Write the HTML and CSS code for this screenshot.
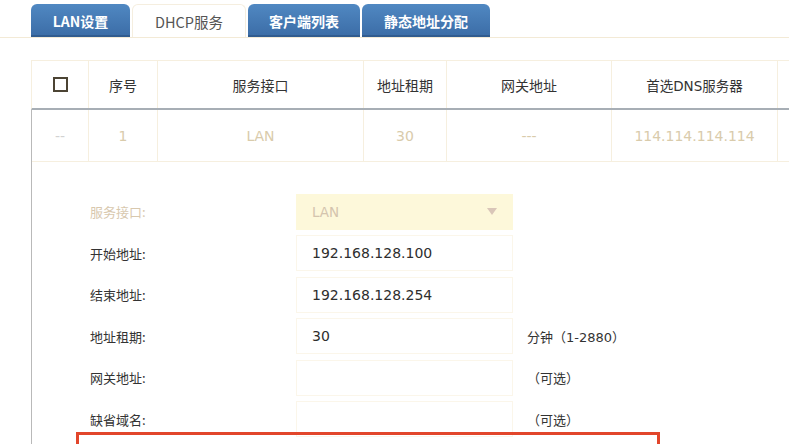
FILE: index.html
```html
<!DOCTYPE html>
<html lang="zh-CN">
<head>
<meta charset="utf-8">
<title>DHCP服务</title>
<link rel="stylesheet" href="styles.css">
</head>
<body>
<div class="page">
  <div class="tabs">
    <div class="tab blue t1">LAN设置</div>
    <div class="tab active t2">DHCP服务</div>
    <div class="tab blue t3">客户端列表</div>
    <div class="tab blue t4">静态地址分配</div>
  </div>

  <div class="table">
    <div class="row head">
      <div class="cell"><span class="checkbox"></span></div>
      <div class="cell">序号</div>
      <div class="cell">服务接口</div>
      <div class="cell">地址租期</div>
      <div class="cell">网关地址</div>
      <div class="cell">首选DNS服务器</div>
      <div class="cell"></div>
    </div>
    <div class="body">
      <div class="row data">
        <div class="cell">--</div>
        <div class="cell">1</div>
        <div class="cell">LAN</div>
        <div class="cell">30</div>
        <div class="cell">---</div>
        <div class="cell">114.114.114.114</div>
        <div class="cell"></div>
      </div>
      <div class="edit">
        <div class="form">
          <div class="label disabled">服务接口:</div>
          <div class="field select"><span>LAN</span><span class="arrow"></span></div>
          <div class="hint"></div>

          <div class="label">开始地址:</div>
          <div class="field">192.168.128.100</div>
          <div class="hint"></div>

          <div class="label">结束地址:</div>
          <div class="field">192.168.128.254</div>
          <div class="hint"></div>

          <div class="label">地址租期:</div>
          <div class="field">30</div>
          <div class="hint">分钟（1-2880）</div>

          <div class="label">网关地址:</div>
          <div class="field"></div>
          <div class="hint">（可选）</div>

          <div class="label">缺省域名:</div>
          <div class="field"></div>
          <div class="hint">（可选）</div>
        </div>
        <div class="highlight"></div>
      </div>
    </div>
  </div>
</div>
</body>
</html>
```

FILE: styles.css
```css
html, body {
  margin: 0;
  padding: 0;
  background: #ffffff;
  overflow: hidden;
}

.page {
  width: 789px;
  height: 444px;
  overflow: hidden;
  font-family: "DejaVu Sans", "Noto Sans CJK SC", sans-serif;
  color: #333333;
}

/* Tabs */
.tabs {
  display: flex;
  gap: 2px;
  padding: 4px 0 0 31px;
  border-bottom: 1px solid #f3ead6;
  height: 33px;
}

.tab {
  height: 33px;
  display: flex;
  align-items: center;
  justify-content: center;
  font-family: "Noto Sans CJK SC", sans-serif;
  font-size: 14px;
  border-radius: 6px 6px 0 0;
  box-sizing: border-box;
}

.tab.blue {
  background: linear-gradient(#5088c2, #3b6ca6);
  color: #ffffff;
  font-weight: 700;
  box-shadow: inset 0 -2px 0 rgba(30, 60, 100, 0.35);
}

.tab.active {
  color: #555555;
  background: #ffffff;
  border: 1px solid #f5eedf;
  border-bottom: none;
  font-size: 14.5px;
}

.t1 { width: 99px; }
.t2 { width: 114px; }
.t3 { width: 112px; }
.t4 { width: 128px; }

/* Table */
.table {
  margin: 22px 0 0 31px;
  width: 900px;
}

.row {
  display: grid;
  grid-template-columns: 57px 69px 206px 83px 165px 166px 154px;
}

.cell {
  display: flex;
  align-items: center;
  justify-content: center;
  border-right: 1px solid #f6efdf;
}

.head {
  height: 47px;
  border-top: 1px solid #f6efdf;
  border-left: 1px solid #f6efdf;
  border-bottom: 2px solid #a7aeb5;
  font-family: "Noto Sans CJK SC", sans-serif;
  font-size: 14px;
  color: #333333;
}

.head .cell:nth-child(6) {
  font-family: "DejaVu Sans", "Noto Sans CJK SC", sans-serif;
  font-size: 13.5px;
}

.checkbox {
  width: 11px;
  height: 11px;
  border: 2px solid #4c4434;
  display: block;
}

.body {
  border-left: 1px solid #b9b9b9;
}

.data {
  height: 51px;
  border-bottom: 1px solid #f6efdf;
  font-size: 14px;
  color: #d9cbab;
}

.data .cell:first-child {
  color: #d2d2d2;
}

/* Edit form */
.edit {
  position: relative;
  padding: 29px 0 0 58px;
  height: 400px;
}

.form {
  display: grid;
  grid-template-columns: 192px 217px auto;
  grid-auto-rows: 41.5px;
  column-gap: 14px;
  align-items: center;
}

.label {
  font-family: "Noto Sans CJK SC", sans-serif;
  font-size: 13px;
  color: #333333;
}

.label.disabled {
  color: #d8c8ae;
}

.field {
  height: 36px;
  box-sizing: border-box;
  border: 1px solid #fbf6ea;
  padding: 0 15px;
  display: flex;
  align-items: center;
  font-size: 14px;
  color: #2e2e2e;
}

.field.select {
  background: #fdf8da;
  border-color: #fdf8da;
  color: #d4c4ae;
  justify-content: space-between;
  font-size: 13.5px;
}

.arrow {
  width: 0;
  height: 0;
  border-left: 5px solid transparent;
  border-right: 5px solid transparent;
  border-top: 7px solid #d9c6b8;
  margin-right: 0;
}

.hint {
  font-family: "DejaVu Sans", "Noto Sans CJK SC", sans-serif;
  font-size: 13px;
  color: #333333;
}

.highlight {
  position: absolute;
  left: 44px;
  top: 270px;
  width: 578px;
  height: 100px;
  border: 3px solid #e2462b;
}
```
